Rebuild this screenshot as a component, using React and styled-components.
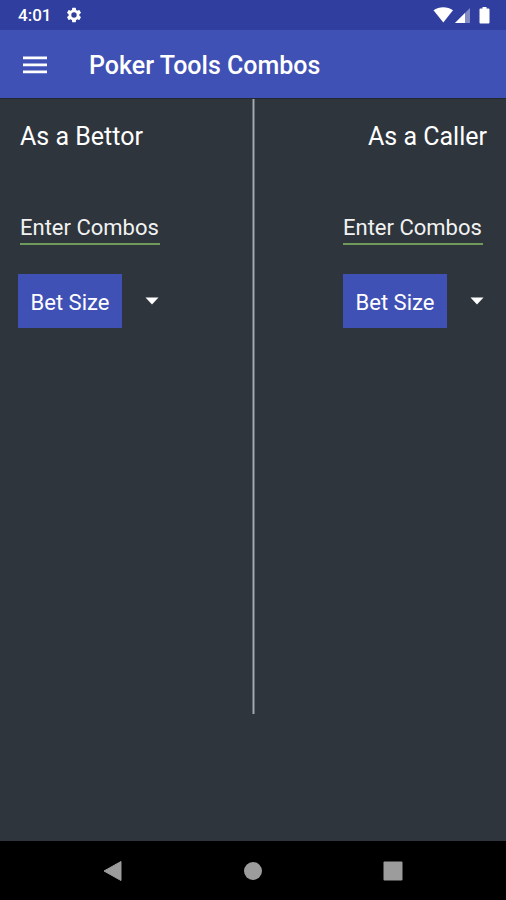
import React, { useState } from 'react';
import styled, { createGlobalStyle } from 'styled-components';

const columns = [
  { id: 'bettor', title: 'As a Bettor', align: 'flex-start', inset: '2px' },
  { id: 'caller', title: 'As a Caller', align: 'flex-end', inset: '0' }
];

const betSizes = ['1/4 Pot', '1/3 Pot', '1/2 Pot', '2/3 Pot', '3/4 Pot', 'Pot'];

const StatusBar = () => (
  <StatusWrapper>
    <StatusGroup>
      <span>4:01</span>
      <svg width="18" height="18" viewBox="0 0 24 24" fill="#fff">
        <path d="M19.14 12.94c.04-.3.06-.61.06-.94s-.02-.64-.07-.94l2.03-1.58a.49.49 0 0 0 .12-.61l-1.92-3.32a.49.49 0 0 0-.59-.22l-2.39.96a7 7 0 0 0-1.62-.94l-.36-2.54a.48.48 0 0 0-.48-.41h-3.84a.48.48 0 0 0-.47.41l-.36 2.54c-.59.24-1.13.57-1.62.94l-2.39-.96a.48.48 0 0 0-.59.22L2.74 8.87a.48.48 0 0 0 .12.61l2.03 1.58c-.05.3-.09.63-.09.94s.02.64.07.94l-2.03 1.58a.49.49 0 0 0-.12.61l1.92 3.32c.12.22.37.29.59.22l2.39-.96c.5.38 1.03.7 1.62.94l.36 2.54c.05.24.24.41.48.41h3.84c.24 0 .44-.17.47-.41l.36-2.54a7 7 0 0 0 1.62-.94l2.39.96c.22.08.47 0 .59-.22l1.92-3.32a.48.48 0 0 0-.12-.61l-2.01-1.58zM12 15.6a3.6 3.6 0 1 1 0-7.2 3.6 3.6 0 0 1 0 7.2z" />
      </svg>
    </StatusGroup>
    <svg width="58" height="18" viewBox="0 0 58 18" fill="#fff">
      <path d="M0.500 4.200C6 0.200 14.500 0.200 20 4.200L10.300 16.500z" />
      <path d="M37 2V17H22z" opacity="0.4" />
      <path d="M32 7V17H22z" />
      <path d="M47.500 2.500h2V1h4v1.500h2q1 0 1 1V16.500q0 1-1 1h-8q-1 0-1-1V3.500q0-1 1-1z" />
    </svg>
  </StatusWrapper>
);

const Column = ({ id, title, align, inset }) => {
  const [size, setSize] = useState('');
  return (
    <ColumnWrapper $align={align}>
      <Heading>{title}</Heading>
      <Fields>
        <ComboInput
          $inset={inset}
          aria-label={`${title}: combos`}
          inputMode="numeric"
          placeholder="Enter Combos"
        />
        <BetRow>
          <BetButton type="button">Bet Size</BetButton>
          <SelectWrapper>
            <BetSelect
              id={`${id}-size`}
              aria-label={`${title}: bet size`}
              value={size}
              onChange={e => setSize(e.target.value)}
            >
              <option value="" />
              {betSizes.map(s => (
                <option key={s}>{s}</option>
              ))}
            </BetSelect>
            <Caret width="14" height="8" viewBox="0 0 14 8">
              <path d="M0.500 0.500h13L7 7.500z" fill="#fff" />
            </Caret>
          </SelectWrapper>
        </BetRow>
      </Fields>
    </ColumnWrapper>
  );
};

const App = () => (
  <Screen>
    <GlobalStyle />
    <StatusBar />
    <AppBar>
      <IconButton type="button" aria-label="Open menu">
        <svg width="24" height="18" viewBox="0 0 24 18" fill="#fff">
          <path d="M0 0.500h24v2.800H0zM0 7.500h24v2.800H0zM0 14.500h24v2.800H0z" />
        </svg>
      </IconButton>
      <Title>Poker Tools Combos</Title>
    </AppBar>
    <Content>
      <Column {...columns[0]} />
      <Divider />
      <Column {...columns[1]} />
    </Content>
    <NavBar>
      <IconButton type="button" aria-label="Back">
        <svg width="20" height="22" viewBox="0 0 20 22">
          <path d="M1 11L18 1.500V20.500z" fill="#9c9c9c" stroke="#9c9c9c" strokeLinejoin="round" />
        </svg>
      </IconButton>
      <IconButton type="button" aria-label="Home">
        <svg width="20" height="20" viewBox="0 0 20 20">
          <circle cx="10" cy="10" r="9" fill="#9c9c9c" />
        </svg>
      </IconButton>
      <IconButton type="button" aria-label="Recent apps">
        <svg width="20" height="20" viewBox="0 0 20 20">
          <rect x="0.500" y="0.500" width="19" height="19" rx="1" fill="#9c9c9c" />
        </svg>
      </IconButton>
    </NavBar>
  </Screen>
);

export default App;

const GlobalStyle = createGlobalStyle`
  * {
    box-sizing: border-box;
  }
  body {
    margin: 0;
    background-color: #2f353d;
    color: #fff;
    font-family: Roboto, sans-serif;
  }
  svg {
    display: block;
  }
  button, input, select {
    margin: 0;
    padding: 0;
    border: 0;
    border-radius: 0;
    color: inherit;
    font-family: inherit;
  }
`;
const Screen = styled.div`
  display: flex;
  flex-direction: column;
  min-height: 100vh;
`;
const StatusWrapper = styled.div`
  display: flex;
  align-items: center;
  justify-content: space-between;
  height: 30px;
  padding: 0 15px 0 18px;
  background-color: #303f9f;
  font-size: 17px;
  font-weight: 500;
`;
const StatusGroup = styled.div`
  display: flex;
  align-items: center;
  gap: 14px;
`;
const AppBar = styled.header`
  display: flex;
  align-items: center;
  gap: 30px;
  height: 69px;
  padding: 2px 11px 0;
  border-bottom: 1px solid #23282f;
  background-color: #3f51b5;
`;
const IconButton = styled.button`
  display: flex;
  align-items: center;
  justify-content: center;
  width: 48px;
  height: 48px;
  background: none;
`;
const Title = styled.h1`
  margin: 0;
  font-size: 25px;
  font-weight: 500;
`;
const Content = styled.main`
  display: flex;
  flex: 1;
`;
const ColumnWrapper = styled.section`
  display: flex;
  flex: 1;
  flex-direction: column;
  align-items: ${({ $align }) => $align};
  padding: 22px 17px 0 18px;
`;
const Heading = styled.h2`
  margin: 0 2px;
  font-size: 25px;
  font-weight: 400;
  line-height: 32px;
`;
const Fields = styled.div`
  display: flex;
  flex-direction: column;
  gap: 29px;
  width: 146px;
  margin-top: 56px;
`;
const ComboInput = styled.input`
  width: 140px;
  height: 36px;
  margin-left: ${({ $inset }) => $inset};
  padding-top: 2px;
  border-bottom: 2px solid #6f9a5b;
  background: none;
  font-size: 22px;
  outline: none;
  &::placeholder {
    color: #f2f2f2;
    opacity: 1;
  }
`;
const BetRow = styled.div`
  display: flex;
  align-items: center;
  justify-content: space-between;
`;
const BetButton = styled.button`
  width: 104px;
  height: 54px;
  padding-top: 2px;
  background-color: #3f51b5;
  font-size: 22px;
`;
const SelectWrapper = styled.div`
  display: grid;
  place-items: center;
  width: 24px;
  height: 48px;
`;
const BetSelect = styled.select`
  grid-area: 1 / 1;
  width: 24px;
  height: 48px;
  appearance: none;
  background: none;
`;
const Caret = styled.svg`
  grid-area: 1 / 1;
  pointer-events: none;
`;
const Divider = styled.div`
  width: 3px;
  margin-bottom: 127px;
  border: solid #646c74;
  border-width: 0 1px;
  background-color: #a3aab0;
`;
const NavBar = styled.nav`
  display: flex;
  align-items: center;
  justify-content: space-between;
  height: 59px;
  padding: 0 89px;
  background-color: #000;
`;
